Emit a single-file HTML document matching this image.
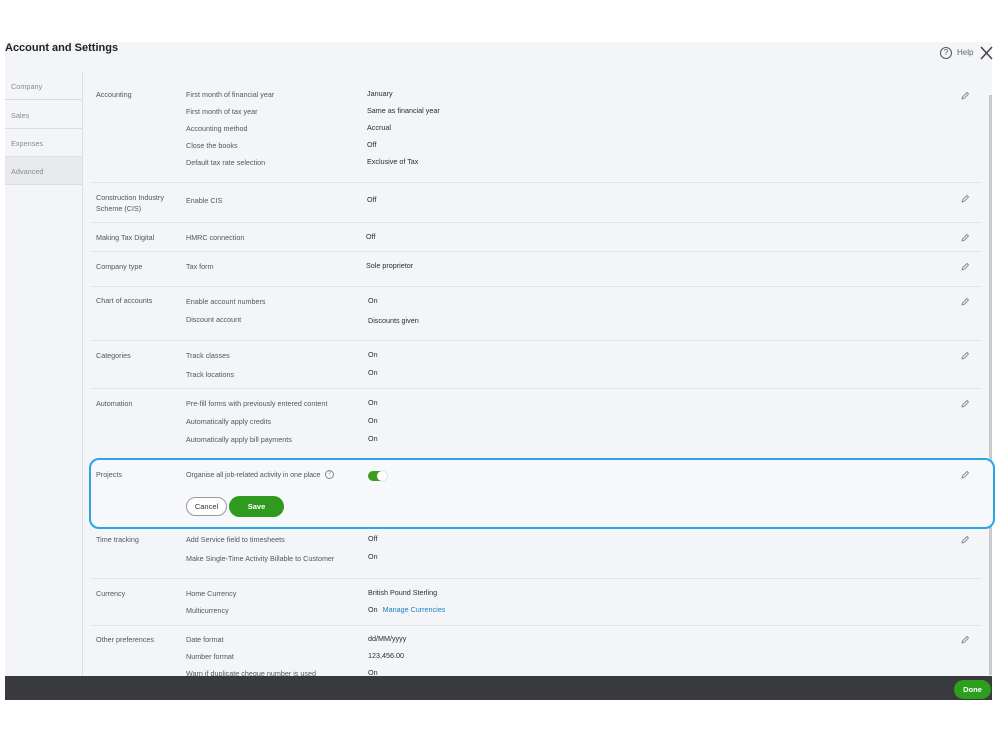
<!DOCTYPE html>
<html><head><meta charset="utf-8"><style>
*{margin:0;padding:0;box-sizing:border-box}
body{width:999px;height:749px;background:#fff;position:relative;overflow:hidden;font-family:"Liberation Sans",sans-serif;color:#4a4b50}
.panel{position:absolute;left:5px;top:42px;width:987px;height:658px;background:#f4f5f8}
.t{position:absolute;font-size:7.2px;line-height:10px;white-space:nowrap;color:#55565b}
.v{color:#2b2c30}
.hr{position:absolute;left:90px;width:892px;height:1px;background:#e3e5ea}
.tab{position:absolute;left:5px;width:77px;height:28px;border-bottom:1px solid #dcdee3;font-size:7.3px;color:#8a8b90;padding:10px 6px}
.pen{position:absolute;width:10px;height:10px}
</style></head><body>
<div class="panel"></div>
<div style="position:absolute;left:5px;top:42px;font-size:11px;font-weight:bold;color:#222">Account and Settings</div>
<div style="position:absolute;left:940px;top:47px;width:12px;height:12px;border:1px solid #555;border-radius:50%;font-size:8px;text-align:center;line-height:10px;color:#555">?</div>
<div class="t" style="left:957px;top:48px;font-size:8px;color:#666">Help</div>
<svg style="position:absolute;left:980px;top:46px" width="13" height="14"><path d="M1 1L12 13M12 1L1 13" stroke="#444" stroke-width="1.5"/></svg>
<div style="position:absolute;left:989px;top:95px;width:3px;height:580px;background:#c8c9cc"></div>
<div style="position:absolute;left:82px;top:72px;width:1px;height:604px;background:#dcdee3"></div>
<div class="tab" style="top:72px">Company</div>
<div class="tab" style="top:101px">Sales</div>
<div class="tab" style="top:129px">Expenses</div>
<div class="tab" style="top:157px;background:#e9eaee">Advanced</div>

<div class="t" style="left:96px;top:90px">Accounting</div>
<div class="t" style="left:186px;top:90px">First month of financial year</div>
<div class="t" style="left:186px;top:107px">First month of tax year</div>
<div class="t" style="left:186px;top:124px">Accounting method</div>
<div class="t" style="left:186px;top:141px">Close the books</div>
<div class="t" style="left:186px;top:158px">Default tax rate selection</div>
<div class="t v" style="left:367px;top:89px">January</div>
<div class="t v" style="left:367px;top:106px">Same as financial year</div>
<div class="t v" style="left:367px;top:123px">Accrual</div>
<div class="t v" style="left:367px;top:140px">Off</div>
<div class="t v" style="left:367px;top:157px">Exclusive of Tax</div>
<div class="hr" style="top:182px"></div>

<div class="t" style="left:96px;top:192px;line-height:11px">Construction Industry<br>Scheme (CIS)</div>
<div class="t" style="left:186px;top:196px">Enable CIS</div>
<div class="t v" style="left:367px;top:195px">Off</div>
<div class="hr" style="top:222px"></div>

<div class="t" style="left:96px;top:233px">Making Tax Digital</div>
<div class="t" style="left:186px;top:233px">HMRC connection</div>
<div class="t v" style="left:366px;top:232px">Off</div>
<div class="hr" style="top:251px"></div>

<div class="t" style="left:96px;top:262px">Company type</div>
<div class="t" style="left:186px;top:262px">Tax form</div>
<div class="t v" style="left:366px;top:261px">Sole proprietor</div>
<div class="hr" style="top:286px"></div>

<div class="t" style="left:96px;top:296px">Chart of accounts</div>
<div class="t" style="left:186px;top:297px">Enable account numbers</div>
<div class="t" style="left:186px;top:315px">Discount account</div>
<div class="t v" style="left:368px;top:296px">On</div>
<div class="t v" style="left:368px;top:316px">Discounts given</div>
<div class="hr" style="top:340px"></div>

<div class="t" style="left:96px;top:351px">Categories</div>
<div class="t" style="left:186px;top:351px">Track classes</div>
<div class="t" style="left:186px;top:370px">Track locations</div>
<div class="t v" style="left:368px;top:350px">On</div>
<div class="t v" style="left:368px;top:368px">On</div>
<div class="hr" style="top:388px"></div>

<div class="t" style="left:96px;top:399px">Automation</div>
<div class="t" style="left:186px;top:399px">Pre-fill forms with previously entered content</div>
<div class="t" style="left:186px;top:417px">Automatically apply credits</div>
<div class="t" style="left:186px;top:435px">Automatically apply bill payments</div>
<div class="t v" style="left:368px;top:398px">On</div>
<div class="t v" style="left:368px;top:416px">On</div>
<div class="t v" style="left:368px;top:434px">On</div>

<div style="position:absolute;left:89px;top:458px;width:906px;height:71px;border:2px solid #2ba6e3;border-radius:10px;background:#f6f8fc"></div>
<div class="t" style="left:96px;top:470px">Projects</div>
<div class="t" style="left:186px;top:470px;letter-spacing:-0.1px">Organise all job-related activity in one place</div>
<div style="position:absolute;left:325px;top:470px;width:9px;height:9px;border:1px solid #888;border-radius:50%;font-size:6px;text-align:center;line-height:7px;color:#888">?</div>
<div style="position:absolute;left:368px;top:471px;width:18px;height:10px;border-radius:5px;background:#3f9c1e"></div>
<div style="position:absolute;left:377px;top:471px;width:10px;height:10px;border-radius:50%;background:#fff;box-shadow:0 0 1px #888"></div>
<div style="position:absolute;left:186px;top:497px;width:41px;height:19px;border:1px solid #999;border-radius:10px;background:#fff;font-size:7.5px;text-align:center;line-height:17px;color:#333">Cancel</div>
<div style="position:absolute;left:229px;top:496px;width:55px;height:21px;border-radius:11px;background:#2e9b1e;font-size:7.5px;font-weight:bold;text-align:center;line-height:21px;color:#fff">Save</div>

<div class="t" style="left:96px;top:535px">Time tracking</div>
<div class="t" style="left:186px;top:535px">Add Service field to timesheets</div>
<div class="t" style="left:186px;top:554px">Make Single-Time Activity Billable to Customer</div>
<div class="t v" style="left:368px;top:534px">Off</div>
<div class="t v" style="left:368px;top:552px">On</div>
<div class="hr" style="top:578px"></div>

<div class="t" style="left:96px;top:589px">Currency</div>
<div class="t" style="left:186px;top:589px">Home Currency</div>
<div class="t" style="left:186px;top:606px">Multicurrency</div>
<div class="t v" style="left:368px;top:588px">British Pound Sterling</div>
<div class="t v" style="left:368px;top:605px">On <span style="color:#1b7fc4;margin-left:3px">Manage Currencies</span></div>
<div class="hr" style="top:625px"></div>

<div class="t" style="left:96px;top:635px">Other preferences</div>
<div class="t" style="left:186px;top:635px">Date format</div>
<div class="t" style="left:186px;top:652px">Number format</div>
<div class="t" style="left:186px;top:669px">Warn if duplicate cheque number is used</div>
<div class="t v" style="left:368px;top:634px">dd/MM/yyyy</div>
<div class="t v" style="left:368px;top:651px">123,456.00</div>
<div class="t v" style="left:368px;top:668px">On</div>

<svg class="pen" style="left:960px;top:91px" viewBox="0 0 10 10"><path d="M2 8L2.5 6L7 1.5L8.5 3L4 7.5Z" fill="none" stroke="#777" stroke-width=".8"/></svg>
<svg class="pen" style="left:960px;top:194px" viewBox="0 0 10 10"><path d="M2 8L2.5 6L7 1.5L8.5 3L4 7.5Z" fill="none" stroke="#777" stroke-width=".8"/></svg>
<svg class="pen" style="left:960px;top:233px" viewBox="0 0 10 10"><path d="M2 8L2.5 6L7 1.5L8.5 3L4 7.5Z" fill="none" stroke="#777" stroke-width=".8"/></svg>
<svg class="pen" style="left:960px;top:262px" viewBox="0 0 10 10"><path d="M2 8L2.5 6L7 1.5L8.5 3L4 7.5Z" fill="none" stroke="#777" stroke-width=".8"/></svg>
<svg class="pen" style="left:960px;top:297px" viewBox="0 0 10 10"><path d="M2 8L2.5 6L7 1.5L8.5 3L4 7.5Z" fill="none" stroke="#777" stroke-width=".8"/></svg>
<svg class="pen" style="left:960px;top:351px" viewBox="0 0 10 10"><path d="M2 8L2.5 6L7 1.5L8.5 3L4 7.5Z" fill="none" stroke="#777" stroke-width=".8"/></svg>
<svg class="pen" style="left:960px;top:399px" viewBox="0 0 10 10"><path d="M2 8L2.5 6L7 1.5L8.5 3L4 7.5Z" fill="none" stroke="#777" stroke-width=".8"/></svg>
<svg class="pen" style="left:960px;top:470px" viewBox="0 0 10 10"><path d="M2 8L2.5 6L7 1.5L8.5 3L4 7.5Z" fill="none" stroke="#777" stroke-width=".8"/></svg>
<svg class="pen" style="left:960px;top:535px" viewBox="0 0 10 10"><path d="M2 8L2.5 6L7 1.5L8.5 3L4 7.5Z" fill="none" stroke="#777" stroke-width=".8"/></svg>
<svg class="pen" style="left:960px;top:635px" viewBox="0 0 10 10"><path d="M2 8L2.5 6L7 1.5L8.5 3L4 7.5Z" fill="none" stroke="#777" stroke-width=".8"/></svg>

<div style="position:absolute;left:5px;top:676px;width:987px;height:24px;background:#393a3d"></div>
<div style="position:absolute;left:954px;top:680px;width:37px;height:19px;border-radius:10px;background:#2ca01c;color:#fff;font-size:7.5px;font-weight:bold;text-align:center;line-height:19px">Done</div>
</body></html>
